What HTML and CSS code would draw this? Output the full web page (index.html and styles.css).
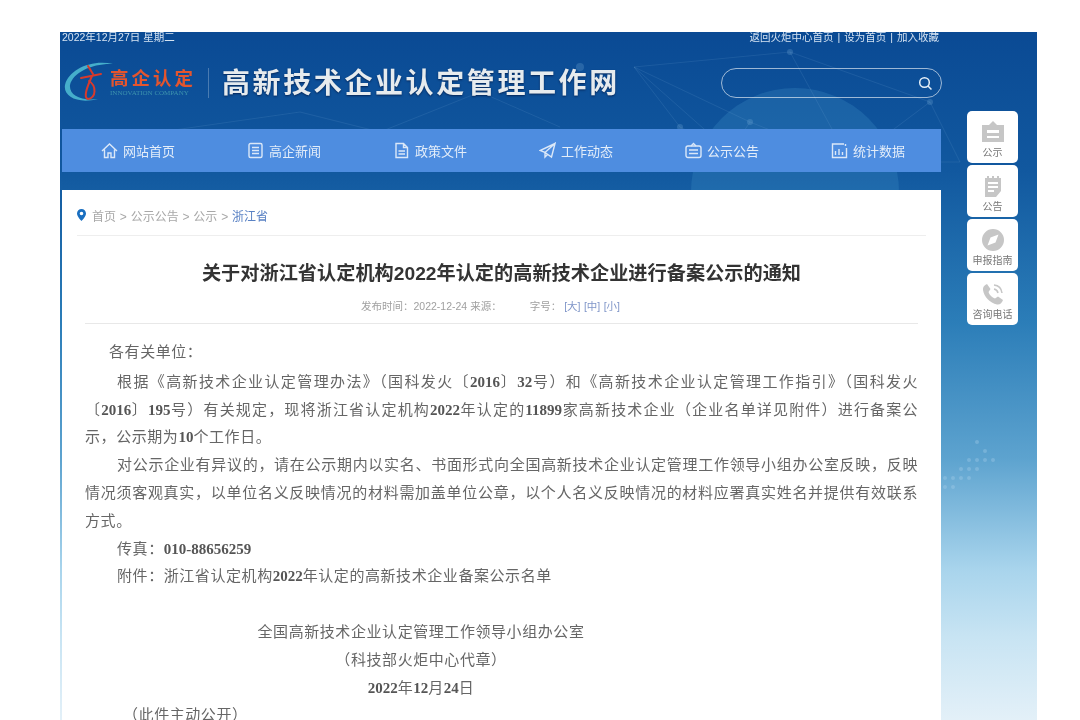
FILE: index.html
```html
<!DOCTYPE html>
<html lang="zh-CN">
<head>
    <meta charset="UTF-8">
    <title>高新技术企业认定管理工作网</title>
    <link rel="stylesheet" href="styles.css">
</head>
<body>
    <div class="frame">
        <!-- Background decoration: globe and network lines -->
        <svg class="backdrop" width="977" height="688" viewBox="0 0 977 688">
            <circle cx="735" cy="160" r="104" fill="#3d8cc4" fill-opacity="0.3"/>
            <g stroke="#7fb4dc" stroke-opacity="0.14" fill="none">
                <path d="M574 35 L730 20 L870 70 L790 130 L690 90 L574 35 L670 120 L690 90"/>
                <path d="M730 20 L790 130 L900 130 M870 70 L900 130 M670 120 L620 95 L574 35"/>
                <path d="M320 100 L420 60 L500 95 M100 100 L240 80 L320 100"/>
            </g>
            <g fill="#8fc0e4" fill-opacity="0.22">
                <circle cx="520" cy="35" r="4"/><circle cx="690" cy="90" r="3"/><circle cx="730" cy="20" r="3"/>
                <circle cx="790" cy="130" r="3"/><circle cx="606" cy="120" r="4"/><circle cx="620" cy="95" r="3"/>
                <circle cx="870" cy="70" r="3"/>
            </g>
            <g fill="#a9d2ea" fill-opacity="0.35" transform="translate(0 -32)">
                <circle cx="917" cy="442" r="2"/><circle cx="925" cy="451" r="2"/><circle cx="909" cy="460" r="2"/>
                <circle cx="917" cy="460" r="2"/><circle cx="925" cy="460" r="2"/><circle cx="933" cy="460" r="2"/>
                <circle cx="901" cy="469" r="2"/><circle cx="909" cy="469" r="2"/><circle cx="917" cy="469" r="2"/>
                <circle cx="893" cy="478" r="2"/><circle cx="901" cy="478" r="2"/><circle cx="909" cy="478" r="2"/>
                <circle cx="885" cy="478" r="2"/><circle cx="885" cy="487" r="2"/><circle cx="893" cy="487" r="2"/>
            </g>
        </svg>

        <div class="main">
            <div class="top-bar">
                <span>2022年12月27日 星期二</span>
                <span class="top-links">返回火炬中心首页<i class="sep">|</i>设为首页<i class="sep">|</i>加入收藏</span>
            </div>

            <div class="brand">
                <svg class="logo-mark" width="50" height="46" viewBox="0 0 50 46">
                    <path d="M49 4 C28 -1 5 9 1 25 C-1 37 14 44 34 39 C16 41 5 35 6 25 C9 12 29 3 49 4Z" fill="#45aecb"/>
                    <g stroke="#d93a2b" stroke-width="2" fill="none" stroke-linecap="round">
                        <path d="M24 6 L29 14"/>
                        <path d="M17 18 L37 14"/>
                        <path d="M28 16 C23 27 19 38 24 39 C32 38 33 26 25 21"/>
                    </g>
                </svg>
                <div class="logo-text">
                    <div class="logo-cn">高企认定</div>
                    <div class="logo-en">INNOVATION COMPANY</div>
                </div>
                <div class="brand-divider"></div>
                <h1 class="site-title">高新技术企业认定管理工作网</h1>
                <div class="search">
                    <svg width="15" height="15" viewBox="0 0 15 15" fill="none" stroke="#e6f0f8" stroke-width="1.5">
                        <circle cx="6.5" cy="6.5" r="4.8"/>
                        <path d="M10 10 L13.5 13.5"/>
                    </svg>
                </div>
            </div>

            <nav class="nav">
                <a class="nav-item">
                    <svg class="nav-icon" viewBox="0 0 17 17"><path d="M1 9 L8.5 2 L16 9 M3.5 7.5 V15.5 H7 V11 H10 V15.5 H13.5 V7.5"/></svg>
                    网站首页
                </a>
                <a class="nav-item">
                    <svg class="nav-icon" viewBox="0 0 17 17"><rect x="2" y="1.5" width="13" height="14" rx="1.5"/><path d="M5 5.5 H12 M5 8.5 H12 M5 11.5 H12"/></svg>
                    高企新闻
                </a>
                <a class="nav-item">
                    <svg class="nav-icon" viewBox="0 0 17 17"><path d="M3 1.5 H10.5 L14.5 5.5 V15.5 H3Z M10.5 1.5 V5.5 H14.5 M5.5 9 H12 M5.5 12 H12"/></svg>
                    政策文件
                </a>
                <a class="nav-item">
                    <svg class="nav-icon" viewBox="0 0 17 17"><path d="M16 1.5 L1 8.5 L6 10.5 L16 1.5 L12.5 15 L6 10.5 V15 L8.5 12.5"/></svg>
                    工作动态
                </a>
                <a class="nav-item">
                    <svg class="nav-icon" viewBox="0 0 17 17"><rect x="1" y="4" width="15" height="11.5" rx="2"/><path d="M6 4 L8.5 1.5 L11 4 M4 8 H13 M4 11.5 H13"/></svg>
                    公示公告
                </a>
                <a class="nav-item">
                    <svg class="nav-icon" viewBox="0 0 17 17"><path d="M13 2 H1.5 V15.5 H15.5 V6 M4.5 13 V9 M8 13 V7 M11.5 13 V10 M14.5 2 V4"/></svg>
                    统计数据
                </a>
            </nav>

            <div class="article">
                <div class="crumbs">
                    <svg width="9" height="13" viewBox="0 0 9 13"><path d="M4.5 0 C2 0 0 2 0 4.5 C0 7.5 4.5 12 4.5 12 C4.5 12 9 7.5 9 4.5 C9 2 7 0 4.5 0Z M4.5 2.7 A1.8 1.8 0 1 1 4.5 6.3 A1.8 1.8 0 1 1 4.5 2.7Z" fill="#1a6fc0" fill-rule="evenodd"/></svg>
                    <span>首页 &gt; 公示公告 &gt; 公示 &gt; <span class="crumb-current">浙江省</span></span>
                </div>
                <h2 class="article-title">关于对浙江省认定机构2022年认定的高新技术企业进行备案公示的通知</h2>
                <div class="meta">
                    <span>发布时间：2022-12-24 来源：</span>
                    <span class="meta-size">字号：</span>
                    <span class="meta-links">[大] [中] [小]</span>
                </div>
                <div class="article-body">
                    <p class="greet">各有关单位：</p>
                    <p class="indent">根据《高新技术企业认定管理办法》（国科发火〔<b>2016</b>〕<b>32</b>号）和《高新技术企业认定管理工作指引》（国科发火〔<b>2016</b>〕<b>195</b>号）有关规定，现将浙江省认定机构<b>2022</b>年认定的<b>11899</b>家高新技术企业（企业名单详见附件）进行备案公示，公示期为<b>10</b>个工作日。</p>
                    <p class="indent">对公示企业有异议的，请在公示期内以实名、书面形式向全国高新技术企业认定管理工作领导小组办公室反映，反映情况须客观真实，以单位名义反映情况的材料需加盖单位公章，以个人名义反映情况的材料应署真实姓名并提供有效联系方式。</p>
                    <p class="indent">传真：<b>010-88656259</b></p>
                    <p class="indent">附件：浙江省认定机构<b>2022</b>年认定的高新技术企业备案公示名单</p>
                    <p>&nbsp;</p>
                    <div class="signature">
                        <p>全国高新技术企业认定管理工作领导小组办公室</p>
                        <p>（科技部火炬中心代章）</p>
                        <p><b>2022</b>年<b>12</b>月<b>24</b>日</p>
                    </div>
                    <p class="public-note">（此件主动公开）</p>
                </div>
            </div>
        </div>

        <div class="side">
            <a class="side-btn">
                <svg class="side-icon" viewBox="0 0 24 24"><path d="M12 1 L8 5 H1 V22 H23 V5 H16Z M6 10 V13 H18 V10Z M6 16 V18 H18 V16Z" fill-rule="evenodd"/></svg>
                公示
            </a>
            <a class="side-btn">
                <svg class="side-icon" viewBox="0 0 24 24"><path d="M4 4 H6 V2 H8 V4 H11 V2 H13 V4 H16 V2 H18 V4 H20 V17 L15 23 H4Z M7 8 V10 H17 V8Z M7 12 V14 H17 V12Z M7 16 V18 H13 V16Z" fill-rule="evenodd"/></svg>
                公告
            </a>
            <a class="side-btn">
                <svg class="side-icon" viewBox="0 0 24 24"><path d="M12 1 A11 11 0 1 1 12 23 A11 11 0 1 1 12 1Z M17.5 6.5 L9.5 9.5 L6.5 17.5 L14.5 14.5Z" fill-rule="evenodd"/></svg>
                申报指南
            </a>
            <a class="side-btn">
                <svg class="side-icon" viewBox="0 0 24 24"><path d="M6 2 L9.5 7 L7.5 10 C8.5 13 11 15.5 14 16.5 L17 14.5 L22 18 C21 21 19 23 16 22.5 C9 21 3 15 2 8 C1.5 5 3.5 3 6 2Z"/><path d="M13 3 C17.5 3.5 20.5 6.5 21 11 M13 7 C15.5 7.5 16.5 8.5 17 11" fill="none" stroke="#c6c6c6" stroke-width="1.5"/></svg>
                咨询电话
            </a>
        </div>
    </div>
</body>
</html>
```

FILE: styles.css
```css
* {
    margin: 0;
    padding: 0;
    box-sizing: border-box;
}

body {
    background: #fff;
    font-family: "Liberation Sans", "Noto Sans CJK SC", sans-serif;
    height: 720px;
    overflow: hidden;
    padding: 32px 43px 0 60px;
}

.frame {
    position: relative;
    display: flex;
    height: 688px;
    overflow: hidden;
    background: linear-gradient(180deg, #0a4a94 0%, #11589f 20%, #2b7db8 42%, #5da3cf 62%, #a8d4ec 78%, #c8e4f3 88%, #e3f0f8 100%);
    filter: blur(0.45px);
}

.backdrop {
    position: absolute;
    top: 0;
    left: 0;
}

.main {
    position: relative;
    width: 881px;
    padding-left: 2px;
    flex: none;
}

/* Header */
.top-bar {
    display: flex;
    justify-content: space-between;
    height: 12px;
    font-size: 10.5px;
    line-height: 10px;
    color: #d5e3f2;
}

.top-links {
    margin-right: 2px;
}

.sep {
    margin: 0 4px;
    font-style: normal;
}

.brand {
    display: flex;
    align-items: center;
    height: 85px;
    padding: 0 0 7px 2px;
}

.logo-mark {
    flex: none;
    margin-right: -4px;
}

.logo-text {
    width: 95px;
    flex: none;
}

.logo-cn {
    font-size: 18.5px;
    line-height: 21px;
    font-weight: bold;
    letter-spacing: 3px;
    color: #e4552e;
}

.logo-en {
    font-family: "Liberation Serif", serif;
    font-size: 7px;
    line-height: 9px;
    white-space: nowrap;
    color: #3d93ad;
}

.brand-divider {
    width: 1px;
    height: 30px;
    margin: 0 13px 0 3px;
    background: rgba(255, 255, 255, 0.25);
}

.site-title {
    flex: none;
    margin-top: -4px;
    font-size: 28px;
    font-weight: bold;
    letter-spacing: 2.6px;
    white-space: nowrap;
    color: #e6ebee;
    text-shadow: 0 1px 2px rgba(0, 20, 60, 0.7);
}

.search {
    display: flex;
    align-items: center;
    justify-content: flex-end;
    width: 221px;
    height: 30px;
    margin-left: auto;
    margin-right: -1px;
    flex: none;
    padding-right: 8px;
    border: 1px solid rgba(255, 255, 255, 0.6);
    border-radius: 15px;
}

/* Nav */
.nav {
    display: grid;
    grid-template-columns: repeat(6, 1fr);
    height: 43px;
    padding-left: 3px;
    background: #4e8de0;
}

.nav-item {
    display: flex;
    align-items: center;
    justify-content: center;
    gap: 5px;
    font-size: 13px;
    color: #e3edf9;
}

.nav-icon {
    width: 17px;
    height: 17px;
    fill: none;
    stroke: #dbe8f8;
    stroke-width: 1.4;
}

/* Article */
.article {
    height: 530px;
    margin-top: 18px;
    padding: 0 15px;
    overflow: hidden;
    background: #fff;
}

.crumbs {
    display: flex;
    align-items: center;
    gap: 6px;
    height: 46px;
    padding-top: 6px;
    font-size: 12px;
    word-spacing: 0.5px;
    color: #a8a8a8;
    border-bottom: 1px solid #eee;
}

.crumb-current {
    color: #5a82c4;
}

.article-title {
    margin-top: 25px;
    font-size: 19.2px;
    line-height: 26px;
    text-align: center;
    color: #333;
}

.meta {
    display: flex;
    height: 25px;
    margin: 12px 8px 0;
    padding-left: 276px;
    font-size: 10.5px;
    line-height: 14px;
    color: #a0a0a0;
    border-bottom: 1px solid #e8e8e8;
}

.meta-size {
    margin-left: 28px;
}

.meta-links {
    margin-left: 3px;
    word-spacing: 0.5px;
    color: #7f95c8;
}

.article-body {
    margin: 15px 8px 0;
    font-family: "Liberation Serif", "Noto Sans CJK SC", serif;
    font-size: 15px;
    letter-spacing: 0.57px;
    line-height: 27.8px;
    text-align: justify;
    color: #666;
}

.article-body b {
    letter-spacing: 0;
    color: #555;
}

.greet {
    padding-left: 24px;
    margin-bottom: 2px;
}

.indent {
    text-indent: 32px;
}

.signature {
    width: 340px;
    margin-left: 166px;
    text-align: center;
    white-space: nowrap;
}

.public-note {
    padding-left: 38px;
}

/* Side buttons */
.side {
    position: relative;
    display: flex;
    flex-direction: column;
    gap: 2px;
    width: 51px;
    margin-left: 26px;
    padding-top: 79px;
}

.side-btn {
    display: flex;
    flex-direction: column;
    align-items: center;
    justify-content: flex-end;
    height: 52px;
    padding-bottom: 4px;
    gap: 3px;
    font-size: 10px;
    line-height: 12px;
    color: #777;
    background: #fff;
    border-radius: 5px;
}

.side-icon {
    width: 24px;
    height: 24px;
    fill: #c6c6c6;
}
```
